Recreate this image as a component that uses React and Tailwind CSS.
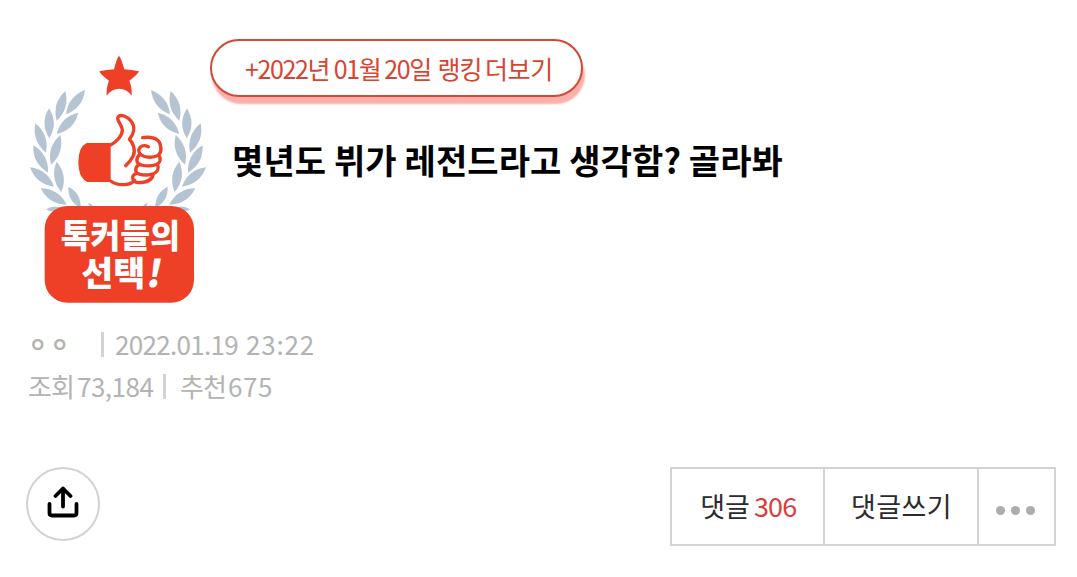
import React from 'react'

// [tipX, tipY, endX, endY] of each leaf on the left branch
const leaves = [
  [195, 150, 138, 223],
  [136, 153, 110, 242],
  [87, 205, 88, 295],
  [175, 218, 110, 282],
  [46, 250, 78, 338],
  [121, 285, 93, 374],
  [40, 316, 84, 398],
  [30, 382, 102, 440],
  [110, 365, 124, 456],
  [62, 445, 140, 494],
  [145, 440, 182, 504],
  [78, 508, 130, 508],
  [205, 488, 222, 508]
]

const leafPath = ([x1, y1, x2, y2]) => {
  const len = Math.hypot(x2 - x1, y2 - y1)
  const bulge = Math.min(28, len * 0.32)
  const nx = (-(y2 - y1) / len) * bulge
  const ny = ((x2 - x1) / len) * bulge
  const mx = (x1 + x2) / 2
  const my = (y1 + y2) / 2
  return `M${x1} ${y1}Q${mx + nx} ${my + ny} ${x2} ${y2}Q${mx - nx} ${my - ny} ${x1} ${y1}Z`
}

const Branch = ({ transform }) => (
  <g transform={transform} fill="#b5c4d2">
    {leaves.map((leaf, index) => (
      <path key={index} d={leafPath(leaf)} />
    ))}
  </g>
)

const ChoiceBadge = () => (
  <svg viewBox="0 0 570 810" className="w-[190px] h-[270px] shrink-0">
    <Branch />
    <Branch transform="translate(588 0) scale(-1 1)" />

    {/* Star */}
    <path
      d="M297 48Q302 50 313 88Q335 90 357 94Q352 105 328 122Q337 145 335 167Q320 146 298 146Q275 146 260 167Q258 145 267 122Q242 105 238 94Q260 90 282 88Q292 50 297 48Z"
      fill="#ee3f27"
    />

    {/* Thumbs up */}
    <g transform="translate(150 195)">
      <path d="M122 114H50Q25 126 25 172Q26 220 52 231H122Z" fill="#ee3f27" />
      <g fill="none" stroke="#ee3f27" strokeWidth="10" strokeLinecap="round" strokeLinejoin="round">
        <path d="M122 120C142 110 158 90 157 74C156 58 138 46 144 36C151 26 172 34 183 48C199 68 189 90 178 103C190 114 197 136 190 152Q182 168 167 182" />
        <path d="M218 98C242 94 264 100 270 116C276 134 272 145 264 151C248 160 218 158 210 146C200 132 214 115 235 125" />
        <path d="M210 148C196 160 198 177 214 180C240 186 266 182 270 167Q272 157 265 151" />
        <path d="M207 179C192 189 195 205 210 208C234 213 258 208 263 195Q266 186 263 180" />
        <path d="M200 205C182 211 185 231 205 233C228 233 245 226 249 210" />
        <path d="M122 228Q138 240 162 239Q182 239 194 226" />
      </g>
    </g>

    <rect x="74" y="498" width="448" height="290" rx="68" fill="#ee3f27" />
    <g fill="#fff" className="font-['Noto_Sans_CJK_KR',sans-serif] font-black">
      <text x="122" y="623" fontSize="98" textLength="358" lengthAdjust="spacingAndGlyphs">톡커들의</text>
      <text x="184" y="739" fontSize="101" textLength="192" lengthAdjust="spacingAndGlyphs">선택</text>
      <text transform="translate(376 741) skewX(-10)" fontSize="112">!</text>
    </g>
  </svg>
)

const Divider = ({ className }) => <span className={`w-[3px] h-[25px] bg-[#d3d3d3] ${className}`} />

const App = () => {
  return (
    <div className="w-[1077px] h-[577px] overflow-hidden bg-white whitespace-nowrap font-['Noto_Sans_CJK_KR',sans-serif]">
      {/* Post header */}
      <header className="flex items-start pl-5 pt-10">
        <ChoiceBadge />
        <div className="-mt-px">
          <button className="flex items-center w-[373px] h-[58px] pl-[29px] rounded-[29px] border-2 border-[#d2493a] bg-white text-[#d8452f] shadow-[2px_7px_2px_#f9b0aa]">
            <span className="flex text-[25px] leading-none tracking-[-1.4px] font-normal">
              <span className="w-[92px]">+2022년</span>
              <span className="w-[48px]">01월</span>
              <span className="w-[53px]">20일</span>
              <span className="w-[51px] tracking-[-1px]">랭킹</span>
              <span className="tracking-[-0.4px]">더보기</span>
            </span>
          </button>
          <h1 className="mt-10 ml-[22px] text-[34px] leading-[46px] font-bold tracking-[0.1px] text-black">
            몇년도 뷔가 레전드라고 생각함? 골라봐
          </h1>
        </div>
      </header>

      {/* Post info */}
      <div className="pl-7 pt-[13px] text-[26px] leading-[42px] font-normal text-[#b3b3b3]">
        <div className="flex items-center h-[42px]">
          <span className="w-[73px] pl-px text-[19px] tracking-[4.5px] font-bold">ㅇㅇ</span>
          <Divider className="mr-[11px]" />
          <span className="w-[131px] tracking-[-0.7px]">2022.01.19</span>
          <span className="tracking-[0.8px]">23:22</span>
        </div>
        <div className="flex items-center h-[42px]">
          <span className="w-[49px] tracking-[-1px]">조회</span>
          <span className="w-[86px] tracking-[-0.5px]">73,184</span>
          <Divider className="mr-[14px]" />
          <span className="w-[48px] tracking-[-1px]">추천</span>
          <span className="tracking-[0.6px]">675</span>
        </div>
      </div>

      {/* Actions */}
      <div className="flex items-start justify-between pl-[26px] pr-[21px] pt-[60px]">
        <button className="flex items-center justify-center size-[74px] rounded-full border-2 border-[#d3d3d3]">
          <svg viewBox="0 0 32 32" className="size-8 -mt-1" fill="none" stroke="#000" strokeWidth="3.8" strokeLinecap="round" strokeLinejoin="round">
            <path d="M16 20.5V2.5M8.5 10L16 2.5L23.5 10M2.5 18V27Q2.5 29.5 5 29.5H27Q29.5 29.5 29.5 27V18" />
          </svg>
        </button>
        <div className="flex h-[79px] border-2 border-[#d3d3d3] text-[27px] font-normal text-[#2b2b2b]">
          <button className="flex items-center w-[151px] pl-6">
            <span className="w-[58px]">댓글</span>
            <span className="tracking-[-0.9px] text-[#dc3c3c]">306</span>
          </button>
          <button className="flex items-center w-[154px] pl-[26px] border-l-2 border-[#d3d3d3] tracking-[0.4px]">댓글쓰기</button>
          <button className="flex items-center justify-center gap-[6px] w-[77px] pt-2 pr-0.5 border-l-2 border-[#d3d3d3]">
            <span className="size-[9px] rounded-full bg-[#adadad]" />
            <span className="size-[9px] rounded-full bg-[#adadad]" />
            <span className="size-[9px] rounded-full bg-[#adadad]" />
          </button>
        </div>
      </div>
    </div>
  )
}

export default App
